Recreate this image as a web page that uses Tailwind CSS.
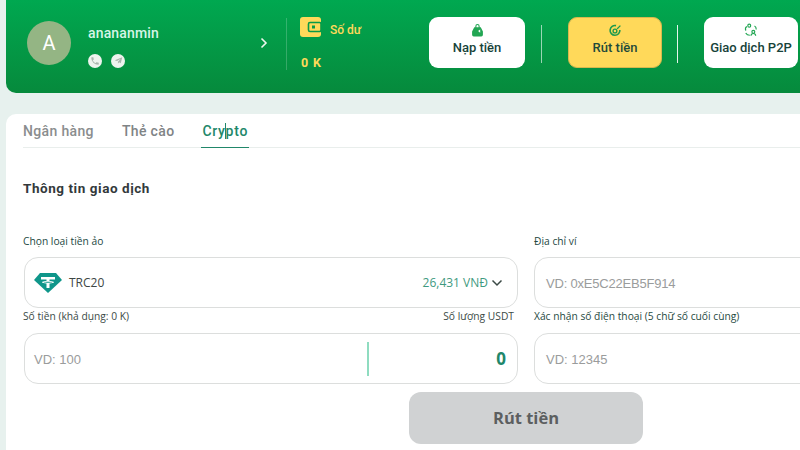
<!DOCTYPE html>
<html lang="vi">
<head>
<meta charset="utf-8">
<script src="https://cdn.jsdelivr.net/npm/@tailwindcss/browser@4"></script>
</head>
<body class="w-[800px] h-[450px] overflow-hidden bg-[#e7f1ee] font-['Inter',sans-serif]">
<div class="w-[800px] h-[450px] overflow-hidden pl-[6px] flex flex-col">
  <header class="h-[93px] w-[794px] shrink-0 rounded-bl-[10px] bg-gradient-to-b from-[#00a850] to-[#068a3c] flex items-center relative">
    <div class="w-[44px] h-[44px] ml-[21px] mb-[8px] rounded-full bg-[#94b584] text-white text-[20px] flex items-center justify-center font-['Roboto',sans-serif] shrink-0">A</div>
    <div class="ml-[17px] w-[170px] mb-[2px] shrink-0">
      <div class="text-[14px] leading-[18px] tracking-[0.15px] font-medium text-[#d6f5e6] font-['Roboto',sans-serif]">anananmin</div>
      <div class="flex gap-[9px] mt-[12px]">
        <span class="w-[14px] h-[14px] rounded-full bg-[#eef3ee] flex items-center justify-center">
          <svg viewBox="0 0 24 24" class="w-[10px] h-[10px]" fill="#a9b5ad"><path d="M6.6 10.8a15 15 0 0 0 6.6 6.6l2.2-2.2a1 1 0 0 1 1-.25 11 11 0 0 0 3.6.6 1 1 0 0 1 1 1V20a1 1 0 0 1-1 1A17 17 0 0 1 3 4a1 1 0 0 1 1-1h3.5a1 1 0 0 1 1 1 11 11 0 0 0 .6 3.6 1 1 0 0 1-.25 1z"/></svg>
        </span>
        <span class="w-[14px] h-[14px] rounded-full bg-[#eef3ee] flex items-center justify-center">
          <svg viewBox="0 0 24 24" class="w-[9px] h-[9px]" fill="#a9b5ad"><path d="M22 3 2 11l6 2.5L18 7l-7.5 8v5l3.5-3.5 4 3z"/></svg>
        </span>
      </div>
    </div>
    <svg viewBox="0 0 12 12" class="w-[12px] h-[12px] mb-[8px] shrink-0" fill="none" stroke="#eef7ee" stroke-width="1.6"><path d="M3.500 1.500 8 6l-4.500 4.500"/></svg>
    <div class="ml-[16px] w-px h-[52px] mb-[6px] bg-white/20 shrink-0"></div>
    <div class="ml-[13px] w-[129px] h-[60px] shrink-0 flex flex-col">
      <div class="flex items-center gap-[9px] h-[22px] -mt-[1px]">
        <svg viewBox="0 0 21 20" class="w-[21px] h-[20px]"><rect width="21" height="20" rx="3" fill="#ffd95a"/><rect x="8.500" y="5.500" width="12.500" height="9" rx="1.500" fill="#ffd95a" stroke="#0a9a48" stroke-width="1.600"/><rect x="12" y="8.500" width="3" height="3" fill="#0a9a48"/></svg>
        <span class="mt-[6px] text-[12px] text-[#ffd95a] font-medium font-['Roboto',sans-serif]">Số dư</span>
      </div>
      <div class="mt-[17px] pl-[1px] text-[12.500px] leading-[16px] tracking-[0.9px] font-bold text-[#ffd95a] font-['Roboto',sans-serif]">0 K</div>
    </div>
    <a class="w-[96px] h-[51px] mb-[8px] pb-[6px] shrink-0 rounded-[9px] bg-white flex flex-col items-center justify-center text-[#17433a]">
      <svg viewBox="0 0 24 24" class="w-[13px] h-[13px] mb-[3px]" fill="#22a653"><path d="M8 6V4a4 4 0 0 1 8 0v2h2l4 8v6a3 3 0 0 1-3 3H5a3 3 0 0 1-3-3v-6l4-8zm2 0h4V4a2 2 0 0 0-4 0z"/><path d="M13 13l4-3v6z" fill="#fff"/></svg>
      <span class="text-[13px] leading-[16px] font-medium font-['Roboto',sans-serif]">Nạp tiền</span>
    </a>
    <div class="ml-[16px] w-px h-[38px] mb-[6px] bg-white/60 shrink-0"></div>
    <a class="ml-[26px] w-[94px] h-[51px] mb-[8px] pb-[6px] shrink-0 rounded-[9px] bg-[#ffd95a] border border-[#d8b84e] flex flex-col items-center justify-center text-[#1f4a3a]">
      <svg viewBox="0 0 24 24" class="w-[13px] h-[13px] mb-[3px]" fill="none" stroke="#1f9a4d" stroke-width="3"><path d="M20 11a9 9 0 1 1-7-8"/><circle cx="11" cy="13" r="3.500" stroke-width="2.500"/><path d="m15 9 6-6" stroke-width="2.500"/></svg>
      <span class="text-[13px] leading-[16px] font-medium font-['Roboto',sans-serif]">Rút tiền</span>
    </a>
    <div class="ml-[15px] w-px h-[38px] mb-[6px] bg-white/90 shrink-0"></div>
    <a class="ml-[26px] w-[94px] h-[51px] mb-[8px] pb-[6px] shrink-0 rounded-[9px] bg-white flex flex-col items-center justify-center text-[#17433a]">
      <svg viewBox="0 0 24 24" class="w-[14px] h-[14px] mb-[3px]" fill="none" stroke="#22a653" stroke-width="2"><circle cx="9" cy="4.500" r="2.500"/><circle cx="16" cy="15" r="2.500"/><path d="M12 22c0-3 1.500-4 4-4s4 1 4 4M3 13c-1-3 0-6 2-7M18 5c2 1 3 3 3 6M10 21c-3 0-6-2-7-4"/></svg>
      <span class="text-[13px] leading-[16px] whitespace-nowrap font-medium font-['Roboto',sans-serif]">Giao dịch P2P</span>
    </a>
  </header>

  <main class="mt-[21px] w-[900px] flex-1 bg-white rounded-tl-[10px] pl-[17px]">
    <nav class="h-[34px] border-b border-[#e9eeec] flex gap-[28px] font-['Roboto',sans-serif] text-[14px] font-medium tracking-[0.35px]">
      <span class="h-[34px] pt-[8px] leading-[18px] text-[#8a8d8e]">Ngân hàng</span>
      <span class="h-[34px] pt-[8px] leading-[18px] text-[#7f8486]">Thẻ cào</span>
      <span class="relative -ml-px h-[34px] pt-[8px] px-[1px] leading-[18px] tracking-[0.7px] text-[#21876a] border-b border-[#21876a]">Crypto<span class="absolute left-[24px] top-[9px] w-px h-[16px] bg-[#21876a]"></span></span>
    </nav>
    <h2 class="mt-[31px] text-[13.500px] leading-[18px] tracking-[0.55px] font-bold text-[#33393b] font-['Roboto',sans-serif]">Thông tin giao dịch</h2>

    <div class="mt-[36px] grid grid-cols-[495px_400px] gap-x-[16px] font-['Open_Sans',sans-serif]">
      <div class="ml-px">
        <label class="block h-[24px] -ml-px text-[10.250px] leading-[16px] text-[#24483f]">Chọn loại tiền ảo</label>
        <div class="h-[51px] border border-[#dcdedd] rounded-[14px] flex items-center pl-[9px] pr-[14px]">
          <svg viewBox="0 0 28 20" class="w-[28px] h-[20px]"><path fill="#0f968a" d="M6 0h16l6 7-14 13L0 7z"/><path fill="#fff" d="M7 4h14v2.500h-5.500V8c2.500.1 4.500.6 4.500 1.200s-2 1.100-4.500 1.200V15h-3v-4.600C10 10.300 8 9.800 8 9.200S10 8.100 12.500 8V6.500H7z"/><path fill="#0f968a" d="M9.500 9.200c1 .3 2.800.5 4.500.5s3.500-.2 4.500-.5c-1-.2-2.800-.4-4.500-.4s-3.500.2-4.500.4z"/></svg>
          <span class="ml-[7px] text-[12px] text-[#3e4644]">TRC20</span>
          <span class="ml-auto text-[12px] text-[#3f9a80]">26,431 VNĐ</span>
          <svg viewBox="0 0 12 12" class="ml-[3px] w-[12px] h-[12px]" fill="none" stroke="#3c4a46" stroke-width="1.500"><path d="m1.500 3.500 4.500 4.500 4.500-4.500"/></svg>
        </div>
      </div>
      <div>
        <label class="block h-[24px] text-[10.250px] leading-[16px] text-[#24483f]">Địa chỉ ví</label>
        <div class="h-[51px] border border-[#dcdedd] rounded-[14px] flex items-center pl-[11px] pt-[2px] text-[13px] tracking-[-0.2px] text-[#9a9c9c] font-['Liberation_Sans',sans-serif]">VD: 0xE5C22EB5F914</div>
      </div>
      <div class="ml-px">
        <div class="flex justify-between h-[25px] -ml-px pr-[4px] text-[10.250px] leading-[16px] text-[#3b4a46]">
          <label>Số tiền (khả dụng: 0 K)</label><span>Số lượng USDT</span>
        </div>
        <div class="h-[51px] border border-[#dcdedd] rounded-[14px] flex items-center pl-[9px] pr-[11px] font-['Liberation_Sans',sans-serif]">
          <span class="w-[333px] pt-[2px] text-[13px] text-[#9a9c9c]">VD: 100</span>
          <span class="w-[2px] h-[34px] bg-[#8fdcc0]"></span>
          <span class="ml-auto text-[17px] font-bold text-[#21876a] font-['Open_Sans',sans-serif]">0</span>
        </div>
      </div>
      <div>
        <label class="block h-[25px] text-[10.250px] leading-[16px] text-[#1f4a3f]">Xác nhận số điện thoại (5 chữ số cuối cùng)</label>
        <div class="h-[51px] border border-[#dcdedd] rounded-[14px] flex items-center pl-[11px] pt-[2px] text-[13px] text-[#9a9c9c] font-['Liberation_Sans',sans-serif]">VD: 12345</div>
      </div>
    </div>
    <button class="block mt-[8px] ml-[386px] w-[234px] h-[52px] rounded-[12px] bg-[#d0d2d3] text-[#5c5f60] text-[16.500px] font-bold font-['Open_Sans',sans-serif]">Rút tiền</button>
  </main>
</div>
</body>
</html>
